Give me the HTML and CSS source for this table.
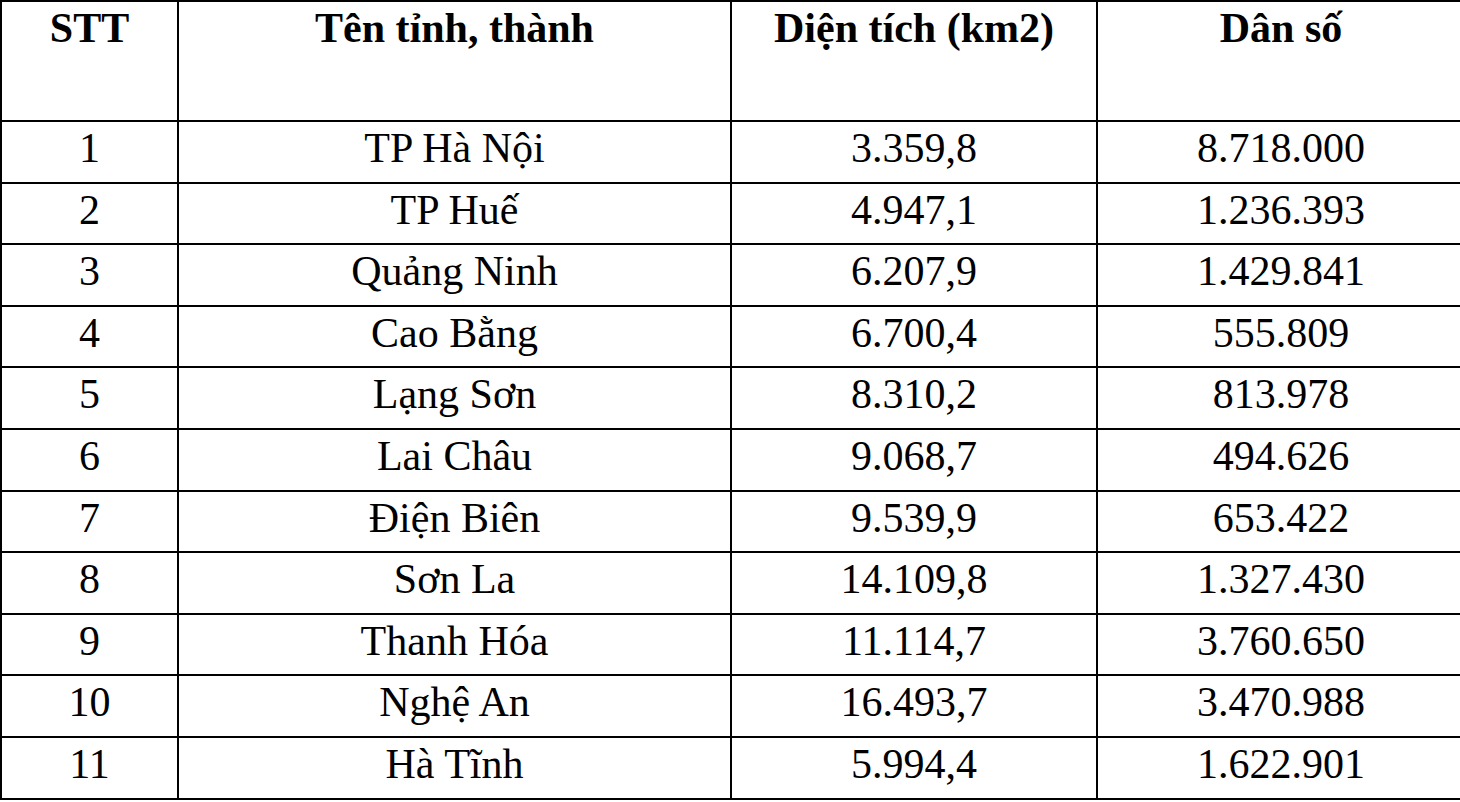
FILE: index.html
```html
<!DOCTYPE html>
<html lang="vi">
<head>
<meta charset="utf-8">
<title>Diện tích và dân số</title>
<link rel="stylesheet" href="styles.css">
</head>
<body>
<table class="data">
  <colgroup>
    <col class="c1">
    <col class="c2">
    <col class="c3">
    <col class="c4">
  </colgroup>
  <thead>
    <tr class="head">
      <th>STT</th>
      <th>Tên tỉnh, thành</th>
      <th>Diện tích (km2)</th>
      <th>Dân số</th>
    </tr>
  </thead>
  <tbody>
    <tr><td>1</td><td>TP Hà Nội</td><td>3.359,8</td><td>8.718.000</td></tr>
    <tr><td>2</td><td>TP Huế</td><td>4.947,1</td><td>1.236.393</td></tr>
    <tr><td>3</td><td>Quảng Ninh</td><td>6.207,9</td><td>1.429.841</td></tr>
    <tr><td>4</td><td>Cao Bằng</td><td>6.700,4</td><td>555.809</td></tr>
    <tr><td>5</td><td>Lạng Sơn</td><td>8.310,2</td><td>813.978</td></tr>
    <tr><td>6</td><td>Lai Châu</td><td>9.068,7</td><td>494.626</td></tr>
    <tr><td>7</td><td>Điện Biên</td><td>9.539,9</td><td>653.422</td></tr>
    <tr><td>8</td><td>Sơn La</td><td>14.109,8</td><td>1.327.430</td></tr>
    <tr><td>9</td><td>Thanh Hóa</td><td>11.114,7</td><td>3.760.650</td></tr>
    <tr><td>10</td><td>Nghệ An</td><td>16.493,7</td><td>3.470.988</td></tr>
    <tr><td>11</td><td>Hà Tĩnh</td><td>5.994,4</td><td>1.622.901</td></tr>
  </tbody>
</table>
</body>
</html>
```

FILE: styles.css
```css
html, body {
  margin: 0;
  padding: 0;
  background: #ffffff;
  overflow: hidden;
}

.data {
  border-collapse: collapse;
  table-layout: fixed;
  width: 1464px;
  font-family: "Liberation Serif", "Times New Roman", serif;
  font-size: 42px;
  line-height: 42px;
  color: #000000;
}

.c1 { width: 177px; }
.c2 { width: 553px; }
.c3 { width: 366px; }
.c4 { width: 368px; }

.data th,
.data td {
  border: 2px solid #000000;
  padding: 5px 0 0 0;
  text-align: center;
  vertical-align: top;
  box-sizing: border-box;
}

.data th {
  font-weight: bold;
  height: 120px;
}

.data td {
  font-weight: normal;
  height: 61.6px;
}
```
